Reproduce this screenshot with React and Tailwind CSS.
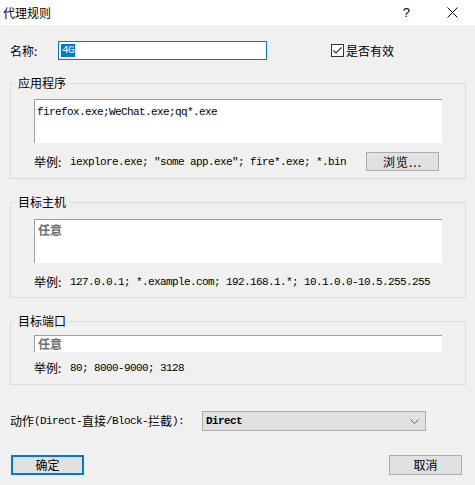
import React from 'react';

const mono = "font-['Liberation_Mono','Noto_Sans_CJK_SC',monospace] text-[11px] tracking-[-0.6px]";

const Example = ({ children }) => (
  <div className="flex items-center h-[16px]">
    <span className="w-[36px]">举例:</span>
    <span className={mono}>{children}</span>
  </div>
);

const Group = ({ title, children, className = '' }) => (
  <fieldset className={`w-[456px] border border-[#dcdcdc] p-0 ${className}`}>
    <legend className="ml-[4px] px-[3px] leading-[16px]">{title}</legend>
    <div className="pl-[23px] pr-[23px]">{children}</div>
  </fieldset>
);

export default function App() {
  return (
    <div className="w-[475px] h-[485px] bg-[#f0f0f0] text-black text-[12px] leading-[16px] font-['Noto_Sans_CJK_SC','Microsoft_YaHei',sans-serif]">
      {/* title bar */}
      <div className="h-[25px] bg-white flex items-center pl-[3px]">
        <span>代理规则</span>
        <span className="ml-auto mr-[37px] text-[13px] font-['Liberation_Sans',sans-serif]">?</span>
        <svg width="11" height="11" viewBox="0 0 11 11" className="mr-[17px]">
          <path d="M0.5 0.5 L10.5 10.5 M10.5 0.5 L0.5 10.5" stroke="#000" strokeWidth="1" />
        </svg>
      </div>

      <div className="px-[10px] pt-[16px]">
        {/* name row */}
        <div className="flex items-center h-[19px]">
          <span className="w-[48px]">名称:</span>
          <div className="w-[209px] h-[19px] border border-[#0078d7] bg-white flex items-center pl-[2px]">
            <span className={`${mono} bg-[#0078d7] text-white leading-[13px] px-[1px]`}>4G</span>
          </div>
          <label className="ml-[64px] flex items-center gap-[2px]">
            <span className="w-[13px] h-[13px] border border-[#333] bg-white flex items-center justify-center">
              <svg width="11" height="11" viewBox="0 0 11 11">
                <path d="M1.5 5.5 L4 8 L9.5 2.5" fill="none" stroke="#333" strokeWidth="1.2" />
              </svg>
            </span>
            <span>是否有效</span>
          </label>
        </div>

        {/* applications */}
        <Group title="应用程序" className="mt-[15px] pb-[7px]">
          <div className="mt-[8px] h-[44px] bg-white border-t border-l border-[#a0a0a0] pl-[2px] pt-[2px]">
            <span className={mono}>firefox.exe;WeChat.exe;qq*.exe</span>
          </div>
          <div className="mt-[9px] flex items-center justify-between h-[19px]">
            <Example>iexplore.exe; "some app.exe"; fire*.exe; *.bin</Example>
            <button className="mr-[3px] w-[73px] h-[19px] bg-[#e1e1e1] border border-[#adadad] text-[12px] leading-[16px] tracking-[1px]">
              浏览...
            </button>
          </div>
        </Group>

        {/* hosts */}
        <Group title="目标主机" className="mt-[15px] pb-[7px]">
          <div className="mt-[9px] h-[44px] bg-white border-t border-l border-[#a0a0a0] pl-[3px] pt-[2px] text-[#6d6d6d] font-bold">
            任意
          </div>
          <div className="mt-[11px]">
            <Example>127.0.0.1; *.example.com; 192.168.1.*; 10.1.0.0-10.5.255.255</Example>
          </div>
        </Group>

        {/* ports */}
        <Group title="目标端口" className="mt-[15px] pb-[8px]">
          <div className="mt-[6px] h-[17px] bg-white border-t border-l border-[#a0a0a0] pl-[3px] text-[#6d6d6d] font-bold leading-[16px]">
            任意
          </div>
          <div className="mt-[8px]">
            <Example>80; 8000-9000; 3128</Example>
          </div>
        </Group>

        {/* action */}
        <div className="mt-[26px] flex items-center h-[20px]">
          <div className="w-[192px] flex items-center">
            <span>动作</span>
            <span className={mono}>(Direct-</span>
            <span>直接</span>
            <span className={mono}>/Block-</span>
            <span>拦截</span>
            <span className={mono}>):</span>
          </div>
          <div className="w-[224px] h-[20px] bg-[#e1e1e1] border border-[#adadad] flex items-center pl-[3px] pr-[6px]">
            <span className={`${mono} font-bold`}>Direct</span>
            <svg width="9" height="5" viewBox="0 0 9 5" className="ml-auto">
              <path d="M0.5 0.5 L4.5 4.5 L8.5 0.5" fill="none" stroke="#606060" strokeWidth="1" />
            </svg>
          </div>
        </div>

        {/* buttons */}
        <div className="mt-[24px] flex items-center justify-between h-[20px]">
          <button className="ml-[1px] w-[73px] h-[20px] bg-[#e1e1e1] border-2 border-[#0078d7] text-[12px] leading-[16px]">
            确定
          </button>
          <button className="mr-[3px] w-[73px] h-[20px] bg-[#e1e1e1] border border-[#adadad] text-[12px] leading-[16px]">
            取消
          </button>
        </div>
      </div>
    </div>
  );
}
